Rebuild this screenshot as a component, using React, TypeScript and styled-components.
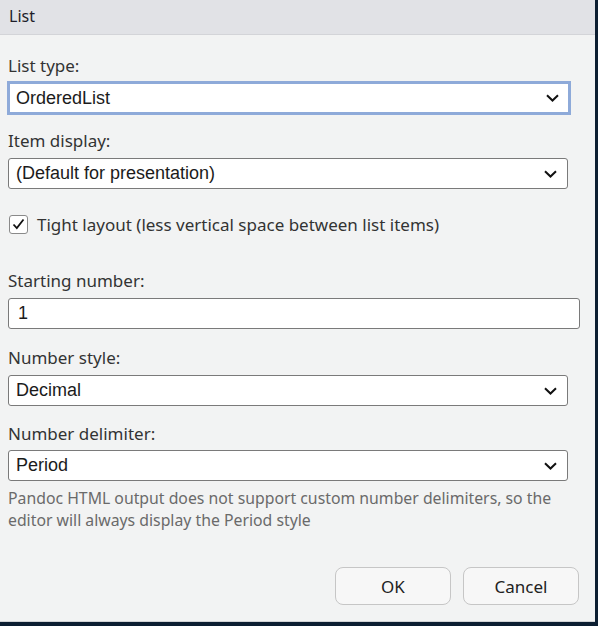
import styled, { createGlobalStyle } from "styled-components";

const GlobalStyle = createGlobalStyle`
  html, body {
    margin: 0;
    padding: 0;
    background: #0c1e31;
  }
  * {
    box-sizing: border-box;
  }
`;

const uiFont = `"Noto Sans", "Open Sans", sans-serif`;
const fieldFont = `"Liberation Sans", Arial, sans-serif`;

const Dialog = styled.div`
  width: 595px;
  height: 622px;
  display: flex;
  flex-direction: column;
  background: #f2f3f3;
  border-bottom: 1px solid #d0d2d4;
  font-family: ${uiFont};
`;

const TitleBar = styled.div`
  height: 35px;
  flex: none;
  display: flex;
  align-items: center;
  padding: 0 9px 2px;
  background: #e1e2e6;
  border-bottom: 1px solid #d3d4d8;
  font-size: 16px;
  color: #1e1e2a;
`;

const Body = styled.div`
  flex: 1;
  display: flex;
  flex-direction: column;
  padding: 21px 0 16px 8px;
`;

const Label = styled.div<{ $top: number }>`
  margin-top: ${(p) => p.$top}px;
  height: 20px;
  line-height: 20px;
  font-size: 17px;
  color: #333;
`;

const SelectBox = styled.div<{ $focused?: boolean; $top: number; $width: number }>`
  margin-top: ${(p) => p.$top}px;
  width: ${(p) => p.$width}px;
  height: 31px;
  flex: none;
  display: flex;
  align-items: center;
  justify-content: space-between;
  padding: 0 10px 0 7px;
  background: #fff;
  border: 1px solid #7a7a7a;
  border-radius: 3px;
  font-family: ${fieldFont};
  font-size: 18px;
  color: #1b1b1b;
  ${(p) =>
    p.$focused &&
    `
    height: 32px;
    border: 2px solid #8eaad9;
    border-radius: 0;
    box-shadow: 0 0 0 1px #8eaad9;
    padding: 0 9px 0 6px;
  `}
`;

const Chevron = () => (
  <svg width="13" height="8" viewBox="0 0 13 8">
    <path d="M1 1.2 L6.5 6.5 L12 1.2" fill="none" stroke="#111" strokeWidth="2" />
  </svg>
);

const CheckRow = styled.label`
  margin-top: 25px;
  height: 20px;
  display: flex;
  align-items: center;
  gap: 9px;
  padding-left: 1px;
  font-size: 17px;
  color: #333;
`;

const CheckBox = styled.span`
  width: 19px;
  height: 19px;
  display: flex;
  align-items: center;
  justify-content: center;
  background: #fff;
  border: 1px solid #8a8a8a;
  border-radius: 3px;
`;

const Help = styled.div`
  margin-top: 6px;
  width: 570px;
  font-size: 15.8px;
  line-height: 22px;
  color: #6a6a6a;
`;

const Footer = styled.div`
  margin-top: auto;
  display: flex;
  justify-content: flex-end;
  gap: 12px;
  padding-right: 16px;
`;

const Button = styled.button`
  width: 116px;
  height: 38px;
  background: #f7f7f7;
  border: 1px solid #c6c6c6;
  border-radius: 8px;
  font-family: ${uiFont};
  font-size: 17px;
  color: #222;
`;

const Select = ({
  value,
  top,
  focused,
  width = 560,
}: {
  value: string;
  top: number;
  focused?: boolean;
  width?: number;
}) => (
  <SelectBox $top={top} $focused={focused} $width={width}>
    <span>{value}</span>
    <Chevron />
  </SelectBox>
);

const TextInput = styled(SelectBox)`
  padding-left: 9px;
`;

export default function App() {
  return (
    <>
      <GlobalStyle />
      <Dialog>
        <TitleBar>List</TitleBar>
        <Body>
          <Label $top={0}>List type:</Label>
          <Select value="OrderedList" top={6} focused width={562} />
          <Label $top={17}>Item display:</Label>
          <Select value="(Default for presentation)" top={7} />
          <CheckRow>
            <CheckBox>
              <svg width="13" height="12" viewBox="0 0 13 12">
                <path d="M1.5 6.5 L4.8 10 L11.5 1.5" fill="none" stroke="#111" strokeWidth="1.8" />
              </svg>
            </CheckBox>
            Tight layout (less vertical space between list items)
          </CheckRow>
          <Label $top={37}>Starting number:</Label>
          <TextInput $top={7} $width={572}>1</TextInput>
          <Label $top={19}>Number style:</Label>
          <Select value="Decimal" top={7} />
          <Label $top={18}>Number delimiter:</Label>
          <Select value="Period" top={6} />
          <Help>
            Pandoc HTML output does not support custom number delimiters, so the
            editor will always display the Period style
          </Help>
          <Footer>
            <Button>OK</Button>
            <Button>Cancel</Button>
          </Footer>
        </Body>
      </Dialog>
    </>
  );
}
